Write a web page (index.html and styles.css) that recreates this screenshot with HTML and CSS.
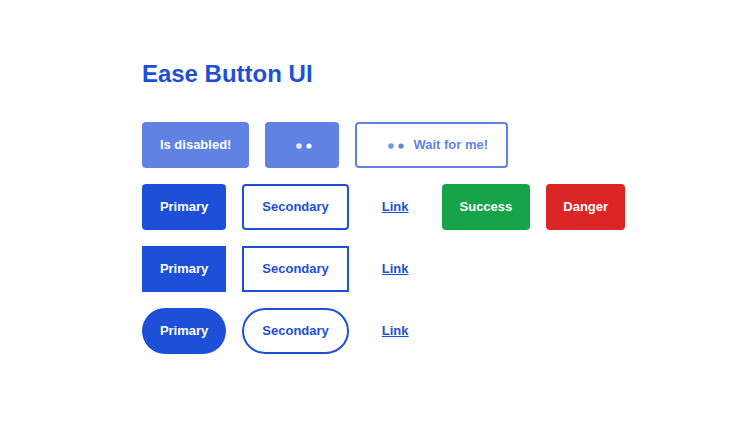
FILE: index.html
```html
<!DOCTYPE html>
<html lang="en">
<head>
<meta charset="utf-8">
<title>Ease Button UI</title>
<link rel="stylesheet" href="styles.css">
</head>
<body>
<main class="page">
  <h1 class="title">Ease Button UI</h1>
  <div class="row">
    <button class="btn primary" disabled>Is disabled!</button>
    <button class="btn primary" disabled aria-label="Loading"><svg class="dots" viewBox="0 0 38 20" aria-hidden="true"><circle cx="16" cy="11" r="2.8" opacity="0.85"/><circle cx="26" cy="11" r="2.6"/></svg></button>
    <button class="btn secondary" disabled><svg class="dots" viewBox="0 0 38 20" aria-hidden="true"><circle cx="16" cy="11" r="2.8" opacity="0.85"/><circle cx="26" cy="11" r="2.6"/></svg>Wait for me!</button>
  </div>
  <div class="row">
    <button class="btn primary">Primary</button>
    <button class="btn secondary">Secondary</button>
    <a class="btn link" href="#">Link</a>
    <button class="btn success">Success</button>
    <button class="btn danger">Danger</button>
  </div>
  <div class="row square">
    <button class="btn primary">Primary</button>
    <button class="btn secondary">Secondary</button>
    <a class="btn link" href="#">Link</a>
  </div>
  <div class="row pill">
    <button class="btn primary">Primary</button>
    <button class="btn secondary">Secondary</button>
    <a class="btn link" href="#">Link</a>
  </div>
</main>
</body>
</html>
```
FILE: styles.css
```css
* {
  box-sizing: border-box;
}

body {
  margin: 0;
  background: #fff;
  font-family: "Liberation Sans", Arial, sans-serif;
}

.page {
  width: fit-content;
  margin: 0 auto;
  padding: 60px 0 0 28px;
}

.title {
  margin: 0 0 34px;
  color: #1d4fd8;
  font-size: 24px;
  line-height: 28px;
}

.row {
  display: flex;
  gap: 16px;
  margin-bottom: 16px;
}

.btn {
  display: inline-flex;
  align-items: center;
  justify-content: center;
  height: 46px;
  padding: 0 18px;
  border: 0;
  border-radius: 4px;
  font-family: inherit;
  font-size: 13px;
  font-weight: 700;
  line-height: 20px;
  color: #fff;
  cursor: pointer;
}

.btn:disabled {
  opacity: 0.7;
  cursor: not-allowed;
}

.primary {
  background: #1d4fd8;
}

.secondary {
  background: #fff;
  border: 2px solid #1d4fd8;
  color: #1d4fd8;
}

.link {
  background: transparent;
  color: #1d4fd8;
  text-decoration: underline;
}

.link,
.danger {
  padding: 0 17px;
}

.success {
  background: #16a34a;
}

.danger {
  background: #dc2626;
}

.square .btn {
  border-radius: 0;
}

.pill .btn {
  border-radius: 23px;
}

.dots {
  width: 38px;
  height: 20px;
  fill: currentColor;
}
```
